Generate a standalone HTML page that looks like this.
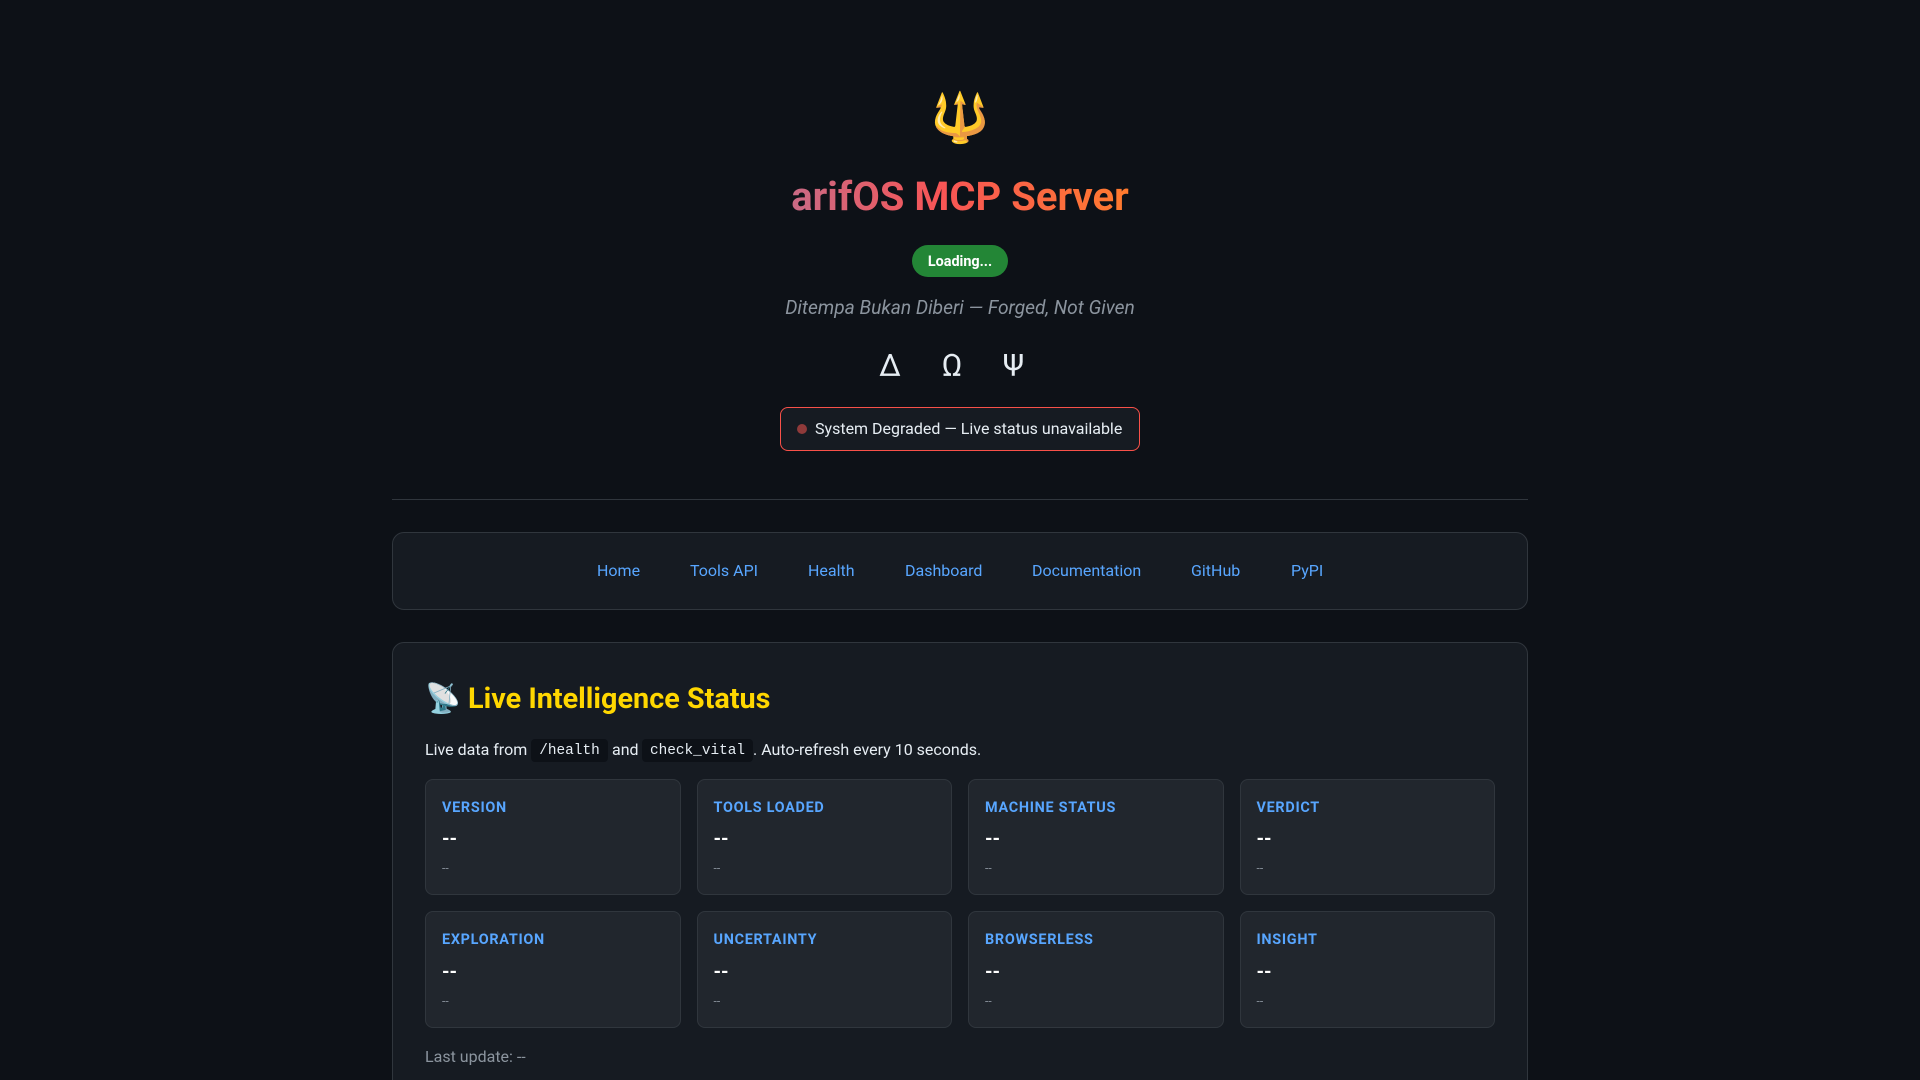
<!DOCTYPE html>
<html lang="en"><head><meta charset="utf-8"><title>arifOS MCP Server</title>
<style>
*{box-sizing:border-box;margin:0;padding:0}
html,body{width:1920px;height:1080px;overflow:hidden;background:#0d1117}
#p{position:relative;width:1920px;height:1080px;overflow:hidden;background:#0d1117;color:#e6edf3;font-family:Roboto,"Liberation Sans",sans-serif;font-size:16px}
.a{position:absolute;white-space:nowrap}
.c{left:0;width:1920px;text-align:center}
.title{font-size:40px;font-weight:700;line-height:48px;display:inline-block;background:linear-gradient(90deg,#c96a85,#f85555 45%,#ff7b2e);-webkit-background-clip:text;background-clip:text;color:transparent}
.badge{left:912px;top:245px;width:96px;height:32px;border-radius:16px;background:#238636;color:#fff;font-size:14.4px;font-weight:700;line-height:33px;text-align:center}
.box{background:#161b22;border:1px solid #30363d;border-radius:12px;left:392px;width:1136px}
.nav{color:#58a6ff;line-height:20px;top:561px}
code{font-family:"Liberation Mono",monospace;font-size:14.4px;background:#0d1117;border-radius:4px;display:block;height:23px;line-height:24px;text-align:center;top:739px;position:absolute}
.card{position:absolute;width:255.5px;background:#21262d;border:1px solid #30363d;border-radius:8px;height:116px}
.card b{position:absolute;left:16px;top:19px;font-size:14.4px;line-height:18px;letter-spacing:.72px;color:#58a6ff;font-weight:700;white-space:nowrap}
.card i{position:absolute;left:16px;top:45px;font-style:normal;font-size:19.2px;line-height:28px;font-weight:700;color:#fff}
.card s{position:absolute;left:16px;top:80px;text-decoration:none;font-size:12px;line-height:16px;color:#8b949e}
.r2 i{top:46px}.r2 s{top:81px}
.sym{top:349px;width:24px;text-align:center;font-size:31px;line-height:34px}
</style></head><body><div id="p">
<div class="a c" style="top:89px;font-size:48px;line-height:58px;font-family:'Noto Color Emoji',sans-serif">🔱</div>
<div class="a c" style="top:173px"><h1 class="title">arifOS MCP Server</h1></div>
<div class="a badge">Loading...</div>
<div class="a c" style="top:296px;font-size:19.2px;line-height:24px;font-style:italic;color:#8b949e">Ditempa Bukan Diberi — Forged, Not Given</div>
<div class="a sym" style="left:878px">Δ</div>
<div class="a sym" style="left:940px">Ω</div>
<div class="a sym" style="left:1001.5px">Ψ</div>
<div class="a" style="left:780px;top:407px;width:360px;height:44px;background:#161b22;border:1px solid #f85149;border-radius:8px"></div>
<div class="a" style="left:797px;top:424px;width:10px;height:10px;border-radius:50%;background:#8f3a3a"></div>
<div class="a" style="left:815px;top:419px;line-height:20px">System Degraded — Live status unavailable</div>
<div class="a" style="left:392px;top:499px;width:1136px;height:1px;background:#30363d"></div>
<div class="a box" style="top:532px;height:78px"></div>
<a class="a nav" style="left:597px">Home</a>
<a class="a nav" style="left:690px">Tools API</a>
<a class="a nav" style="left:808px">Health</a>
<a class="a nav" style="left:905px">Dashboard</a>
<a class="a nav" style="left:1032px">Documentation</a>
<a class="a nav" style="left:1191px">GitHub</a>
<a class="a nav" style="left:1291px">PyPI</a>
<div class="a box" style="top:642px;height:460px"></div>
<div class="a" style="left:425px;top:681px;font-size:28.8px;line-height:36px;font-weight:700;color:#ffd700"><span style="font-family:'Noto Color Emoji',sans-serif">📡</span> Live Intelligence Status</div>
<div class="a" style="left:425px;top:738px;line-height:23px">Live data from</div>
<code style="left:531px;width:77px">/health</code>
<div class="a" style="left:612px;top:738px;line-height:23px">and</div>
<code style="left:642px;width:111px">check_vital</code>
<div class="a" style="left:753px;top:738px;line-height:23px">. Auto-refresh every 10 seconds.</div>
<div class="card" style="left:425px;top:779px"><b>VERSION</b><i>--</i><s>--</s></div>
<div class="card" style="left:696.5px;top:779px"><b>TOOLS LOADED</b><i>--</i><s>--</s></div>
<div class="card" style="left:968px;top:779px"><b>MACHINE STATUS</b><i>--</i><s>--</s></div>
<div class="card" style="left:1239.5px;top:779px"><b>VERDICT</b><i>--</i><s>--</s></div>
<div class="card r2" style="left:425px;top:911px;height:117px"><b>EXPLORATION</b><i>--</i><s>--</s></div>
<div class="card r2" style="left:696.5px;top:911px;height:117px"><b>UNCERTAINTY</b><i>--</i><s>--</s></div>
<div class="card r2" style="left:968px;top:911px;height:117px"><b>BROWSERLESS</b><i>--</i><s>--</s></div>
<div class="card r2" style="left:1239.5px;top:911px;height:117px"><b>INSIGHT</b><i>--</i><s>--</s></div>
<div class="a" style="left:425px;top:1047px;line-height:20px;color:#8b949e">Last update: --</div>
</div></body></html>
